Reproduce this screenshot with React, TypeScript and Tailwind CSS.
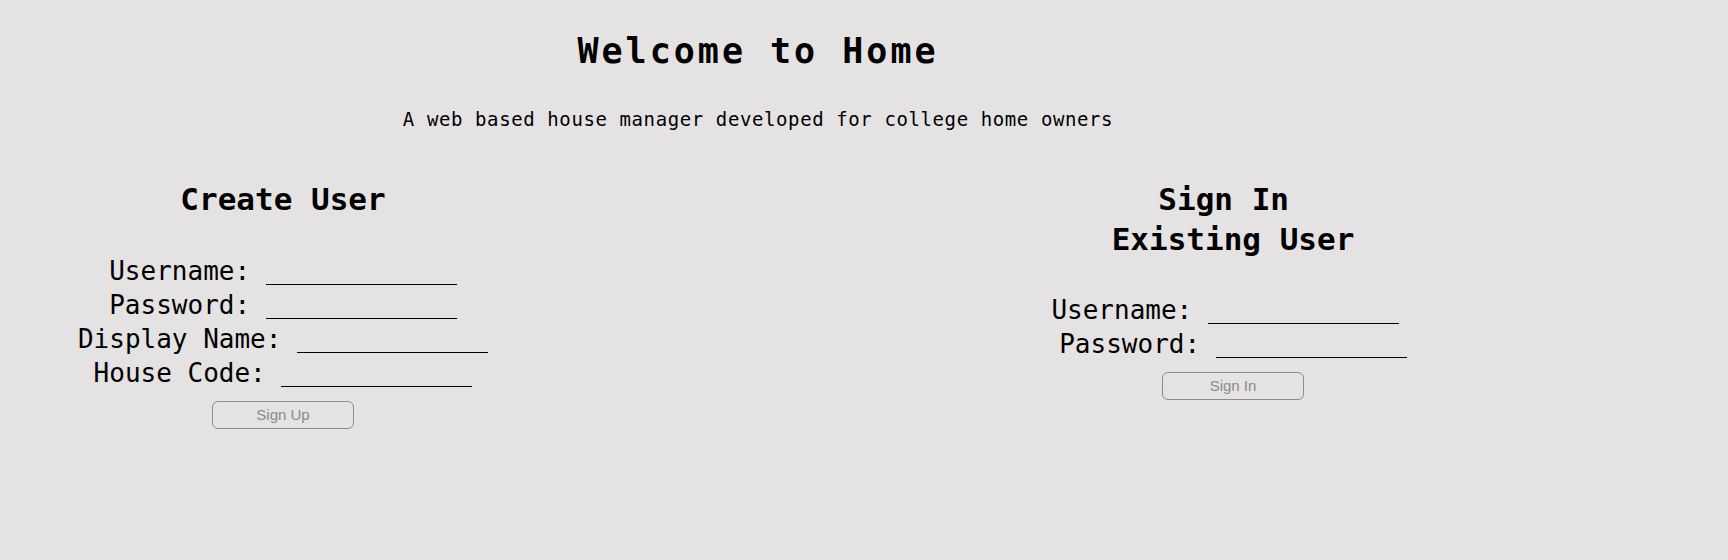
const MONO = "font-['DejaVu_Sans_Mono',monospace]";

interface FieldProps {
    label: string;
    trailing?: boolean;
}

function Field({ label, trailing }: FieldProps) {
    return (
        <div className="flex justify-center items-end h-[34px]">
            <span className="whitespace-pre leading-[34px]">{label} </span>
            <input
                type="text"
                className="w-[191px] h-[26px] mb-[3px] bg-transparent border-0 border-b border-black outline-none"
            />
            {trailing && <span className="whitespace-pre leading-[34px]"> </span>}
        </div>
    );
}

function FormButton({ text }: { text: string }) {
    return (
        <div className="flex justify-center mt-[11px]">
            <button
                disabled
                className="w-[142px] h-[28px] rounded-[6px] border border-[#8c8c8c] bg-transparent text-[15px] text-[#8a8a8a] font-['Liberation_Sans',Arial,sans-serif]"
            >
                {text}
            </button>
        </div>
    );
}

export default function App() {
    return (
        <div className={`min-h-screen bg-[#e4e2e3] text-black ${MONO}`}>
            <div className="w-[1516px] pt-[31px]">
                {/* Header */}
                <h1 className="text-center text-[35px] leading-[40px] font-bold tracking-[3px]">Welcome to Home</h1>
                <p className="text-center text-[19px] leading-[24px] tracking-[0.6px] mt-[36px]">
                    A web based house manager developed for college home owners
                </p>

                <div className="flex justify-between mt-[48px]">
                    {/* Create user */}
                    <div className="w-[566px]">
                        <h2 className="text-center text-[31px] leading-[40px] font-bold">Create User</h2>
                        <div className="mt-[35px] text-[26px]">
                            <Field label="Username:" />
                            <Field label="Password:" />
                            <Field label="Display Name:" />
                            <Field label="House Code:" />
                        </div>
                        <FormButton text="Sign Up" />
                    </div>

                    {/* Sign in */}
                    <div className="w-[566px]">
                        <h2 className="text-center text-[31px] leading-[40px] font-bold whitespace-pre">
                            {'Sign In \nExisting User'}
                        </h2>
                        <div className="mt-[34px] text-[26px]">
                            <Field label="Username:" trailing />
                            <Field label="Password:" />
                        </div>
                        <FormButton text="Sign In" />
                    </div>
                </div>
            </div>
        </div>
    );
}
